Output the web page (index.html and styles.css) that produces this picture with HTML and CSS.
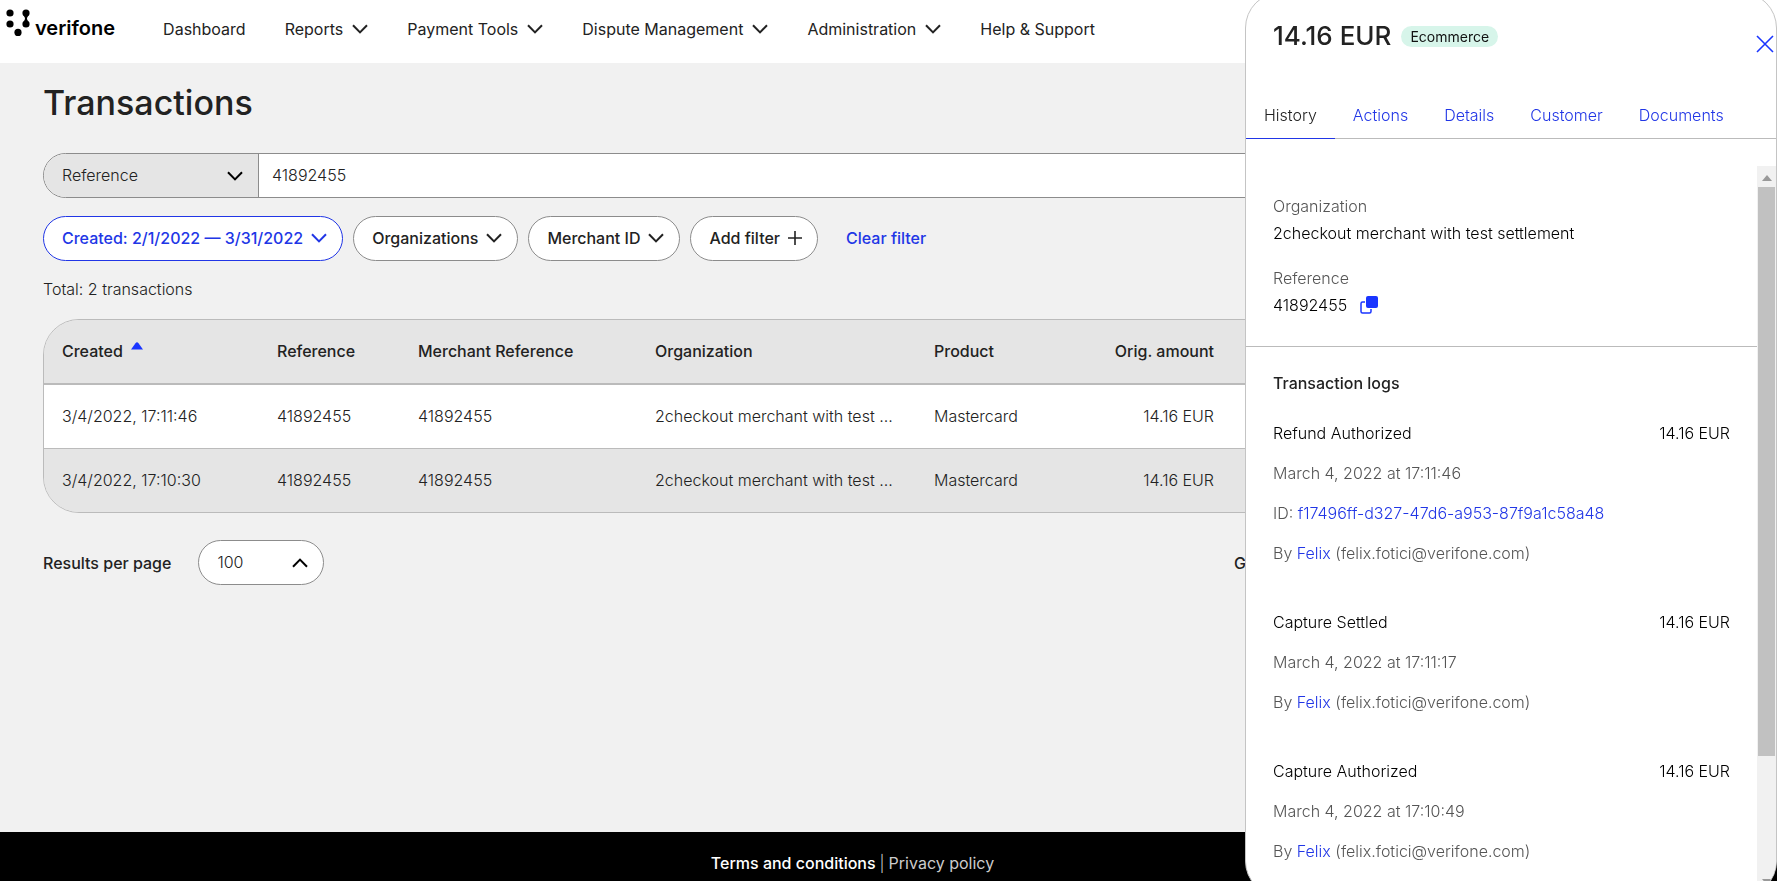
FILE: index.html
```html
<!DOCTYPE html>
<html lang="en">
<head>
  <meta charset="UTF-8">
  <meta name="viewport" content="width=device-width, initial-scale=1.0">
  <title>Transactions</title>
  <link rel="stylesheet" href="styles.css">
</head>
<body>
  <svg class="sprite" aria-hidden="true">
    <symbol id="chevron" viewBox="0 0 16 10"><path d="M1 1.2 8 8.4 15 1.2" fill="none" stroke="currentColor" stroke-width="2"/></symbol>
  </svg>

  <header class="topbar">
    <a class="logo" href="#" aria-label="verifone">
      <svg width="26" height="32" viewBox="0 0 26 32" aria-hidden="true">
        <circle cx="4" cy="5" r="3.6"/><circle cx="20" cy="5" r="3.6"/>
        <circle cx="4" cy="16" r="3.6"/><circle cx="20" cy="16" r="3.6"/>
        <circle cx="12" cy="24.4" r="3.6"/>
        <path d="M17.4 7.4Q20.6 10.5 17.4 13.6H22.6Q19.4 10.5 22.6 7.4Z"/>
      </svg>
      <span>verifone</span>
    </a>
    <nav class="nav">
      <a href="#">Dashboard</a>
      <a href="#">Reports <svg class="chevron"><use href="#chevron"/></svg></a>
      <a href="#">Payment Tools <svg class="chevron"><use href="#chevron"/></svg></a>
      <a href="#">Dispute Management <svg class="chevron"><use href="#chevron"/></svg></a>
      <a href="#">Administration <svg class="chevron"><use href="#chevron"/></svg></a>
      <a href="#">Help &amp; Support</a>
    </nav>
  </header>

  <main class="content">
    <h1>Transactions</h1>

    <form class="search">
      <div class="select search-type">
        <select aria-label="Search by"><option>Reference</option></select>
        <svg class="chevron"><use href="#chevron"/></svg>
      </div>
      <input type="text" value="41892455" aria-label="Search value">
    </form>

    <div class="filters">
      <button type="button" class="pill active">Created: 2/1/2022 — 3/31/2022 <svg class="chevron"><use href="#chevron"/></svg></button>
      <button type="button" class="pill">Organizations <svg class="chevron"><use href="#chevron"/></svg></button>
      <button type="button" class="pill">Merchant ID <svg class="chevron"><use href="#chevron"/></svg></button>
      <button type="button" class="pill">Add filter <svg width="14" height="14" viewBox="0 0 14 14"><path d="M7 0v14M0 7h14" stroke="currentColor" stroke-width="1.6"/></svg></button>
      <button type="button" class="clear">Clear filter</button>
    </div>

    <p class="total">Total: 2 transactions</p>

    <div class="table-wrap">
      <table>
        <colgroup>
          <col class="col-created"><col class="col-reference"><col class="col-merchant">
          <col class="col-organization"><col class="col-product"><col class="col-amount"><col>
        </colgroup>
        <thead>
          <tr>
            <th>Created <svg class="sort" width="12" height="8" viewBox="0 0 12 8"><path d="M0 7.5 4.5 1.2Q6-.5 7.5 1.2L12 7.5Z"/></svg></th>
            <th>Reference</th>
            <th>Merchant Reference</th>
            <th>Organization</th>
            <th>Product</th>
            <th class="amount">Orig. amount</th>
            <th></th>
          </tr>
        </thead>
        <tbody>
          <tr>
            <td>3/4/2022, 17:11:46</td>
            <td>41892455</td>
            <td>41892455</td>
            <td>2checkout merchant with test ...</td>
            <td>Mastercard</td>
            <td class="amount">14.16 EUR</td>
            <td></td>
          </tr>
          <tr>
            <td>3/4/2022, 17:10:30</td>
            <td>41892455</td>
            <td>41892455</td>
            <td>2checkout merchant with test ...</td>
            <td>Mastercard</td>
            <td class="amount">14.16 EUR</td>
            <td></td>
          </tr>
        </tbody>
      </table>
    </div>

    <div class="paging">
      <label for="per-page">Results per page</label>
      <div class="select per-page">
        <select id="per-page"><option>100</option></select>
        <svg class="chevron up"><use href="#chevron"/></svg>
      </div>
      <span class="go-to">Go</span>
    </div>
  </main>

  <footer class="footer">
    <a class="terms" href="#">Terms and conditions</a>
    <span>|</span>
    <a href="#">Privacy policy</a>
  </footer>

  <aside class="panel">
    <div class="panel-header">
      <h2>14.16 EUR</h2>
      <span class="badge">Ecommerce</span>
      <button type="button" class="close" aria-label="Close">
        <svg width="18" height="18" viewBox="0 0 18 18"><path d="M1 1 17 17M17 1 1 17" stroke="currentColor" stroke-width="1.6"/></svg>
      </button>
    </div>

    <nav class="tabs">
      <a class="current" href="#">History</a>
      <a href="#">Actions</a>
      <a href="#">Details</a>
      <a href="#">Customer</a>
      <a href="#">Documents</a>
    </nav>

    <div class="panel-body">
      <div class="panel-content">
        <dl class="summary">
          <dt>Organization</dt>
          <dd>2checkout merchant with test settlement</dd>
          <dt>Reference</dt>
          <dd>41892455
            <button type="button" class="copy" aria-label="Copy reference">
              <svg width="18" height="18" viewBox="0 0 18 18"><path d="M5 6H2.5Q1 6 1 7.5V15.5Q1 17 2.5 17H9.5Q11 17 11 15.5V13" fill="none" stroke="currentColor" stroke-width="1.5"/><rect x="6" y="0" width="12" height="12" rx="2" fill="currentColor"/></svg>
            </button>
          </dd>
        </dl>

        <section class="logs">
          <h3>Transaction logs</h3>
          <article class="log">
            <p class="log-title"><span>Refund Authorized</span><span>14.16 EUR</span></p>
            <p>March 4, 2022 at 17:11:46</p>
            <p>ID: <a href="#">f17496ff-d327-47d6-a953-87f9a1c58a48</a></p>
            <p>By <a href="#">Felix</a> (felix.fotici@verifone.com)</p>
          </article>
          <article class="log">
            <p class="log-title"><span>Capture Settled</span><span>14.16 EUR</span></p>
            <p>March 4, 2022 at 17:11:17</p>
            <p>By <a href="#">Felix</a> (felix.fotici@verifone.com)</p>
          </article>
          <article class="log">
            <p class="log-title"><span>Capture Authorized</span><span>14.16 EUR</span></p>
            <p>March 4, 2022 at 17:10:49</p>
            <p>By <a href="#">Felix</a> (felix.fotici@verifone.com)</p>
          </article>
        </section>
      </div>

      <div class="scrollbar" aria-hidden="true">
        <svg width="10" height="6" viewBox="0 0 10 6"><path d="M0 6 5 0 10 6Z"/></svg>
        <div class="track"><div class="thumb"></div></div>
        <svg width="10" height="6" viewBox="0 0 10 6"><path d="M0 0 5 6 10 0Z"/></svg>
      </div>
    </div>
  </aside>
</body>
</html>
```
FILE: styles.css
```css
* {
  box-sizing: border-box;
}

body {
  display: flex;
  flex-direction: column;
  height: 100vh;
  margin: 0;
  overflow: hidden;
  font-family: Inter, "Liberation Sans", sans-serif;
  font-size: 16px;
  line-height: 24px;
  font-weight: 300;
  color: #222;
  background-color: #f1f1f1;
}

h1, h2, h3, p, dl, dd {
  margin: 0;
}

a {
  color: #2136e6;
  text-decoration: none;
}

button, input, select {
  font: inherit;
  color: inherit;
}

button {
  padding: 0;
  border: none;
  background: none;
  cursor: pointer;
}

svg {
  flex: none;
}

.sprite {
  display: none;
}

.chevron {
  width: 16px;
  height: 10px;
}

.chevron.up {
  transform: rotate(180deg);
}

/* top bar */
.topbar {
  display: flex;
  gap: 48px;
  height: 63px;
  padding: 0 6px;
  background-color: #fff;
}

.logo {
  display: flex;
  gap: 3px;
  padding-top: 8px;
  color: #000;
  font-size: 20px;
  font-weight: 600;
}

.logo span {
  padding-top: 8px;
}

.nav {
  display: flex;
  gap: 39px;
  padding-top: 17px;
}

.nav a {
  display: flex;
  align-items: center;
  gap: 9px;
  height: 24px;
  color: #222;
  font-weight: 400;
}

/* list */
.content {
  flex: 1;
  padding: 20px 43px;
}

h1 {
  font-size: 34px;
  line-height: 40px;
  font-weight: 500;
}

.search {
  display: flex;
  height: 45px;
  margin-top: 30px;
  border: 1px solid #8c8c8c;
  border-radius: 23px;
  background-color: #fff;
  overflow: hidden;
}

.search input {
  flex: 1;
  padding: 0 13px 2px;
  border: none;
  background: none;
  outline: none;
}

.select {
  display: grid;
  align-items: center;
}

.select select, .select .chevron {
  grid-area: 1 / 1;
}

.select select {
  height: 100%;
  padding: 0 18px 2px;
  border: none;
  background: none;
  appearance: none;
  outline: none;
}

.select .chevron {
  justify-self: end;
  margin-right: 15px;
  color: #000;
  pointer-events: none;
}

.search-type {
  width: 215px;
  border-right: 1px solid #8c8c8c;
  background-color: #e5e5e5;
}

.filters {
  display: flex;
  gap: 10px;
  margin-top: 18px;
}

.pill {
  display: flex;
  align-items: center;
  gap: 8px;
  height: 45px;
  padding: 0 15px 2px 18px;
  border: 1px solid #8c8c8c;
  border-radius: 23px;
  background-color: #fff;
  font-weight: 500;
}

.pill.active {
  border-color: #2136e6;
  color: #2136e6;
}

.clear {
  margin-left: 18px;
  padding-bottom: 2px;
  color: #2136e6;
  font-weight: 500;
}

.total {
  margin: 16px 0 18px;
}

.table-wrap {
  border: 1px solid #bbb;
  border-radius: 36px;
  overflow: hidden;
}

table {
  width: 100%;
  table-layout: fixed;
  border-collapse: collapse;
}

.col-created { width: 215px; }
.col-reference { width: 141px; }
.col-merchant { width: 237px; }
.col-organization { width: 279px; }
.col-product { width: 158px; }
.col-amount { width: 158px; }

th, td {
  height: 64px;
  padding: 0 18px;
  text-align: left;
  white-space: nowrap;
}

th {
  padding-bottom: 2px;
  border-bottom: 2px solid #bbb;
  background-color: #e5e5e5;
  font-weight: 500;
}

td {
  background-color: #fff;
}

tbody tr + tr td {
  border-top: 1px solid #bbb;
  background-color: #e5e5e5;
}

.amount {
  text-align: right;
}

.sort {
  margin-left: 4px;
  vertical-align: 7px;
  fill: #1a35ff;
}

.paging {
  display: flex;
  align-items: center;
  margin-top: 27px;
  font-weight: 500;
}

.per-page {
  width: 126px;
  height: 45px;
  margin-left: 27px;
  border: 1px solid #8c8c8c;
  border-radius: 23px;
  background-color: #fff;
  font-weight: 300;
}

.go-to {
  width: 500px;
  margin-left: auto;
}

.footer {
  display: flex;
  justify-content: center;
  gap: 4px;
  height: 49px;
  padding: 19px 72px 0 0;
  background-color: #000;
  color: #ccc;
}

.footer a {
  color: #ccc;
  font-weight: 400;
}

.footer .terms {
  color: #fff;
  font-weight: 500;
}

/* transaction details */
.panel {
  position: fixed;
  top: -8px;
  right: 0;
  bottom: -16px;
  display: flex;
  flex-direction: column;
  width: 532px;
  border: 1px solid #c4c4c4;
  border-radius: 36px;
  background-color: #fff;
  overflow: hidden;
}

.panel-header {
  display: flex;
  align-items: flex-start;
  gap: 10px;
  padding: 31px 2px 0 27px;
}

h2 {
  font-size: 26px;
  line-height: 24px;
  font-weight: 500;
}

.badge {
  margin-top: 2px;
  padding: 0 9px;
  border-radius: 11px;
  background-color: #d7f5ea;
  color: #111;
  font-size: 14px;
  line-height: 21px;
  font-weight: 400;
}

.close {
  height: 18px;
  margin: 11px 0 0 auto;
  color: #1a35ff;
}

.close svg, .copy svg {
  display: block;
}

.tabs {
  display: flex;
  margin-top: 32px;
  border-bottom: 1px solid #bbb;
}

.tabs a {
  margin-bottom: -1px;
  padding: 18px 18px 11px;
  border-bottom: 1px solid transparent;
}

.tabs .current {
  border-color: #2136e6;
  color: #222;
}

.panel-body {
  display: flex;
  flex: 1;
  min-height: 0;
  margin-top: 27px;
}

.panel-content {
  flex: 1;
}

.summary {
  padding: 28px 27px 29px;
  border-bottom: 1px solid #bbb;
}

.summary dt {
  margin-bottom: 3px;
  color: #555;
}

.summary dd {
  display: flex;
  align-items: center;
  gap: 13px;
  color: #000;
}

.summary dd + dt {
  margin-top: 21px;
}

.copy {
  color: #1a35ff;
}

.logs {
  padding: 24px 27px 0;
}

h3 {
  margin-bottom: 26px;
  font-size: 16px;
  font-weight: 500;
}

.log {
  display: flex;
  flex-direction: column;
  gap: 16px;
  margin-bottom: 45px;
  color: #555;
}

.log-title {
  display: flex;
  justify-content: space-between;
  color: #000;
}

.scrollbar {
  display: flex;
  flex-direction: column;
  align-items: center;
  width: 19px;
  padding: 9px 0 11px;
  background-color: #f1f1f1;
  fill: #999;
}

.track {
  flex: 1;
  align-self: stretch;
  margin: 6px 1px;
}

.thumb {
  height: 83%;
  background-color: #c1c1c1;
}
```
